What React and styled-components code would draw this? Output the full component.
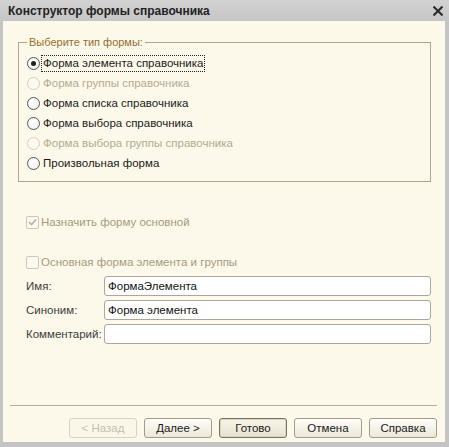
import React from 'react';
import styled, { createGlobalStyle } from 'styled-components';

const GlobalStyle = createGlobalStyle`
  html, body { margin: 0; padding: 0; }
  body {
    font-family: "Liberation Sans", Arial, sans-serif;
    font-size: 11px;
    color: #1a1a1a;
  }
`;

const Window = styled.div`
  width: 449px;
  height: 447px;
  box-sizing: border-box;
  display: flex;
  flex-direction: column;
  background: #c4c4c4;
  padding: 0 4px 5px 3px;
`;

const TitleBar = styled.div`
  height: 21px;
  flex: none;
  display: flex;
  align-items: center;
  justify-content: space-between;
  padding: 0 6px 0 8px;
  margin: 0 -4px 0 -3px;
  background: linear-gradient(#d2d2d2, #c6c6c6);
  font-size: 12px;
  font-weight: bold;
  color: #222;
`;

const Body = styled.div`
  flex: 1;
  display: flex;
  flex-direction: column;
  background: #fcf9ea;
`;

const Content = styled.div`
  flex: 1;
  padding: 0 14px 0 15px;
  display: flex;
  flex-direction: column;
`;

const Group = styled.fieldset`
  margin: 14px 0 0;
  padding: 4px 8px 8px;
  border: 1px solid #aaa68f;
  min-width: 0;
`;

const Legend = styled.legend`
  padding: 0 2px;
  line-height: 14px;
  color: #946f2c;
`;

const OptionRow = styled.label`
  height: 20px;
  display: flex;
  align-items: center;
  gap: 1px;
  font-size: 11.5px;
  color: ${p => (p.disabled ? '#b3ab93' : '#1a1a1a')};
`;

const RadioCircle = styled.span`
  width: 13px;
  height: 13px;
  box-sizing: border-box;
  border-radius: 50%;
  border: 1px solid ${p => (p.disabled ? '#d3cfc2' : '#555')};
  background: ${p => (p.disabled ? '#fbf9f1' : 'radial-gradient(circle at 40% 35%, #fff, #ececec)')};
  display: flex;
  align-items: center;
  justify-content: center;
  flex: none;
  &::after {
    content: '';
    display: ${p => (p.checked ? 'block' : 'none')};
    width: 5px;
    height: 5px;
    border-radius: 50%;
    background: #222;
  }
`;

const OptionText = styled.span`
  padding: 1px 1px;
  line-height: 13px;
  border: 1px ${p => (p.focused ? 'dotted #222' : 'solid transparent')};
`;

const CheckRow = styled.label`
  height: 20px;
  display: flex;
  align-items: center;
  gap: 2px;
  margin: ${p => p.top}px 0 0 8px;
  font-size: 11.5px;
  color: #a69b7e;
`;

const CheckBox = styled.span`
  width: 13px;
  height: 13px;
  box-sizing: border-box;
  border: 1px solid #cdc8b4;
  border-radius: 2px;
  background: #fbf9f0;
  display: flex;
  align-items: center;
  justify-content: center;
  flex: none;
`;

const Fields = styled.div`
  margin: 4px 0 0 8px;
  display: grid;
  grid-template-columns: 78px 1fr;
  row-gap: 4px;
  align-items: center;
  font-size: 11.5px;
`;

const FieldLabel = styled.span`
  color: #3c3c3c;
  white-space: nowrap;
`;

const Input = styled.div`
  height: 20px;
  box-sizing: border-box;
  border: 1px solid #aaa79c;
  border-radius: 3px;
  background: #fff;
  padding: 0 3px;
  display: flex;
  align-items: center;
  color: #111;
`;

const Footer = styled.div`
  padding: 0 8px 4px 7px;
`;

const Separator = styled.div`
  height: 1px;
  background: #b3ae9a;
`;

const ButtonRow = styled.div`
  margin-top: 12px;
  display: flex;
  justify-content: flex-end;
  gap: 7px;
`;

const Button = styled.button`
  width: 68px;
  height: 20px;
  padding: 0;
  font: inherit;
  font-size: 11.5px;
  border-radius: 3px;
  border: 1px solid ${p => (p.disabled ? '#d8d3c2' : p.primary ? '#77745f' : '#a19d8b')};
  background: ${p => (p.disabled ? '#faf7ea' : p.primary ? 'linear-gradient(#f8f5e9, #e7e2d0)' : 'linear-gradient(#fefdf8, #ece8d9)')};
  box-shadow: ${p => (p.primary ? 'inset 0 0 0 1px #d9d4c0' : 'none')};
  color: ${p => (p.disabled ? '#c6c0ae' : '#1a1a1a')};
`;

const options = [
  { text: 'Форма элемента справочника', checked: true },
  { text: 'Форма группы справочника', disabled: true },
  { text: 'Форма списка справочника' },
  { text: 'Форма выбора справочника' },
  { text: 'Форма выбора группы справочника', disabled: true },
  { text: 'Произвольная форма' },
];

function CloseIcon() {
  return (
    <svg width="10" height="10" viewBox="0 0 10 10">
      <path d="M1.2 1.2 L8.8 8.8 M8.8 1.2 L1.2 8.8" stroke="#2b2b2b" strokeWidth="2.1" strokeLinecap="square" />
    </svg>
  );
}

function Tick() {
  return (
    <svg width="9" height="8" viewBox="0 0 9 8">
      <path d="M1 4 L3.5 6.5 L8 1.5" fill="none" stroke="#b6b1a1" strokeWidth="1.6" />
    </svg>
  );
}

export default function App() {
  return (
    <>
      <GlobalStyle />
      <Window>
        <TitleBar>
          <span>Конструктор формы справочника</span>
          <CloseIcon />
        </TitleBar>
        <Body>
          <Content>
            <Group>
              <Legend>Выберите тип формы:</Legend>
              {options.map((o, i) => (
                <OptionRow key={i} disabled={o.disabled}>
                  <RadioCircle checked={o.checked} disabled={o.disabled} />
                  <OptionText focused={o.checked}>{o.text}</OptionText>
                </OptionRow>
              ))}
            </Group>

            <CheckRow top={30}>
              <CheckBox><Tick /></CheckBox>
              <span>Назначить форму основной</span>
            </CheckRow>
            <CheckRow top={20}>
              <CheckBox />
              <span>Основная форма элемента и группы</span>
            </CheckRow>

            <Fields>
              <FieldLabel>Имя:</FieldLabel>
              <Input>ФормаЭлемента</Input>
              <FieldLabel>Синоним:</FieldLabel>
              <Input>Форма элемента</Input>
              <FieldLabel>Комментарий:</FieldLabel>
              <Input />
            </Fields>
          </Content>

          <Footer>
            <Separator />
            <ButtonRow>
              <Button disabled>&lt; Назад</Button>
              <Button>Далее &gt;</Button>
              <Button primary>Готово</Button>
              <Button>Отмена</Button>
              <Button>Справка</Button>
            </ButtonRow>
          </Footer>
        </Body>
      </Window>
    </>
  );
}
